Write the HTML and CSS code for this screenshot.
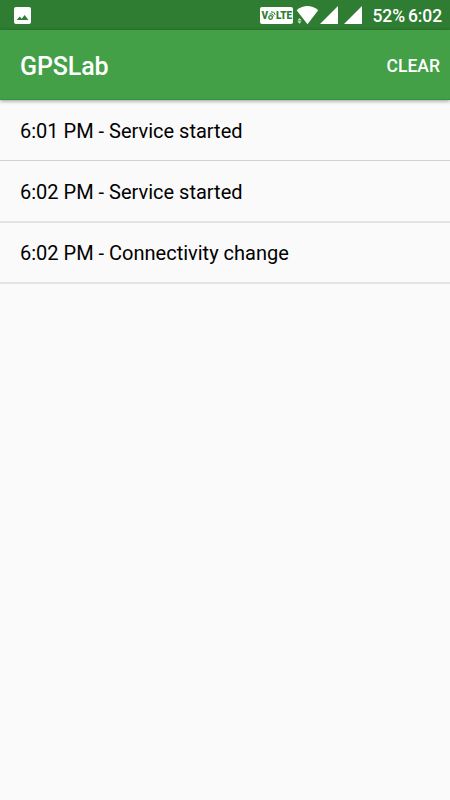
FILE: index.html
```html
<!DOCTYPE html>
<html lang="en">
<head>
<meta charset="utf-8">
<title>GPSLab</title>
<link rel="stylesheet" href="styles.css">
</head>
<body>
<div class="status-bar">
  <svg class="photo" width="17" height="17" viewBox="0 0 17 17"><path fill="#fff" fill-rule="evenodd" d="M2 0H15Q17 0 17 2V15Q17 17 15 17H2Q0 17 0 15V2Q0 0 2 0ZM2.7 13H14.3L10.7 8L7.7 11.7L5.7 9.4Z"/></svg>
  <div class="volte"><span>V</span><svg width="8" height="11" viewBox="0 0 8 11" fill="none" stroke="#2e7d32"><circle cx="2.6" cy="7.5" r="1.8" stroke-width="1.3"/><path d="M1.5 4Q4.8 3 5.7 6.5M3 1.8Q6.8 1.4 7.2 5" stroke-width="1"/></svg><span>LTE</span></div>
  <svg class="wifi" width="23" height="19" viewBox="0 0 23 19"><path fill="#fff" d="M0.6 4.2Q11.5-4 22.2 4.2L11.5 18.2Z"/><path fill="#2e7d32" d="M0 11.5H5.8L8 19H0Z"/><path fill="#c9dfca" d="M3.5 12L5.6 14.5H1.4ZM1.4 15.3H5.6L3.5 17.8Z"/></svg>
  <svg class="signal" width="18" height="18" viewBox="0 0 18 18"><path fill="#fff" d="M18 0V18H0Z"/></svg>
  <svg class="signal second" width="18" height="18" viewBox="0 0 18 18"><path fill="#fff" d="M18 0V18H0Z"/></svg>
  <span class="battery">52%</span>
  <span class="clock">6:02</span>
</div>
<header class="app-bar">
  <h1>GPSLab</h1>
  <button class="clear">CLEAR</button>
</header>
<ul class="log">
  <li>6:01 PM - Service started</li>
  <li>6:02 PM - Service started</li>
  <li>6:02 PM - Connectivity change</li>
</ul>
</body>
</html>
```
FILE: styles.css
```css
* { box-sizing: border-box; }
body {
  margin: 0;
  height: 800px;
  background: #fafafa;
  font-family: Roboto, sans-serif;
  color: #000;
  overflow: hidden;
}
.status-bar {
  display: flex;
  align-items: flex-start;
  height: 30px;
  padding: 0 8px 0 14px;
  background: #2e7d32;
  color: #fff;
  font-size: 17.5px;
  letter-spacing: -0.1px;
  font-weight: 500;
  line-height: 32px;
}
.photo { margin-top: 7px; }
.volte {
  display: flex;
  align-items: center;
  justify-content: center;
  width: 33px;
  height: 17px;
  margin: 7px 3px 0 auto;
  border-radius: 2px;
  background: #fff;
  color: #2e7d32;
  font-size: 10px;
  font-weight: 900;
  line-height: 18px;
}
.wifi { margin-top: 6px; }
.signal { margin: 6px 0 0 1px; }
.second { margin-left: 6px; }
.battery { margin-left: 10.2px; }
.clock { margin-left: 3px; }
.app-bar {
  position: relative;
  display: flex;
  align-items: center;
  justify-content: space-between;
  height: 70px;
  padding: 3px 10px 0 20px;
  background: #43a047;
  border-bottom: 1px solid #2f9638;
  box-shadow: 0 1px 4px rgba(0, 0, 0, .4);
  color: #fff;
}
h1 {
  margin: 0;
  padding-top: 1px;
  font-size: 25px;
  letter-spacing: -0.1px;
  font-weight: 500;
}
.clear {
  padding: 0;
  border: 0;
  background: none;
  color: inherit;
  font: 500 17.5px Roboto, sans-serif;
}
.log {
  margin: 0;
  padding: 0;
  list-style: none;
}
.log li {
  height: 61px;
  padding-left: 20px;
  border-bottom: 1px solid #d2d2d2;
  font-size: 20px;
  line-height: 62px;
}
.log li + li {
  height: 62px;
  border-bottom: 2px solid #e3e3e3;
}
.log li:last-child {
  height: 61px;
  line-height: 60px;
}
```
